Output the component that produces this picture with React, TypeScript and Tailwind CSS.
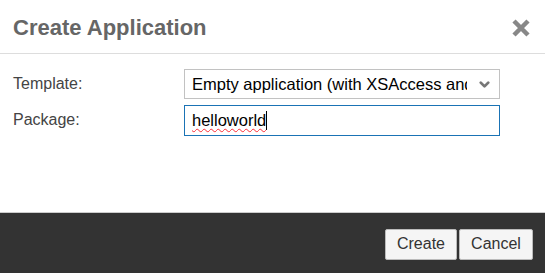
import { ChevronDown } from 'lucide-react';

const font = { fontFamily: '"Liberation Sans", Arial, sans-serif' };

const App = () => {
    return (
        <div className="w-[545px] h-[273px] bg-white flex flex-col overflow-hidden" style={font}>
            <div className="h-[54px] flex items-center justify-between pl-[13px] pr-[14px] border-b border-[#dddddd]">
                <h1 className="text-[22px] font-bold text-[#666666] leading-none pt-[2px]">Create Application</h1>
                <svg width="20" height="20" viewBox="0 0 20 20" className="mt-[2px]">
                    <path d="M3 3 L17 17 M17 3 L3 17" stroke="#888888" strokeWidth="4.5" strokeLinecap="butt" />
                </svg>
            </div>
            <div className="flex-1 flex flex-col gap-[6px] pt-[15px] pl-[13px]">
                <div className="flex items-center h-[30px]">
                    <label className="w-[171px] text-[16px] text-[#444444]">Template:</label>
                    <div className="w-[316px] h-[30px] border border-[#c2c2c2] flex items-center pl-[7px] pr-[7px] bg-white">
                        <span className="flex-1 text-[16.5px] text-black whitespace-nowrap overflow-hidden">Empty application (with XSAccess and .xsapp)</span>
                        <ChevronDown className="w-[15px] h-[15px] text-[#777777] ml-[10px]" strokeWidth={4.5} />
                    </div>
                </div>
                <div className="flex items-center h-[30px]">
                    <label className="w-[171px] text-[16px] text-[#444444]">Package:</label>
                    <div className="w-[316px] h-[31px] border border-[#1a73b5] flex items-center pl-[7px] bg-white">
                        <span className="text-[16.5px] text-black underline decoration-wavy decoration-red-500 decoration-1 underline-offset-2">helloworld</span>
                        <span className="w-px h-[19px] bg-black" />
                    </div>
                </div>
            </div>
            <div className="h-[61px] bg-[#333333] border-t border-[#cccccc] flex items-center justify-end gap-[2px] pr-[12px] pt-[2px]">
                <button className="w-[72px] h-[31px] bg-[#f5f5f5] border border-[#bbbbbb] rounded-[2px] text-[16px] text-[#333333]">Create</button>
                <button className="w-[74px] h-[31px] bg-[#f5f5f5] border border-[#bbbbbb] rounded-[2px] text-[16px] text-[#333333]">Cancel</button>
            </div>
        </div>
    );
};

export default App;
